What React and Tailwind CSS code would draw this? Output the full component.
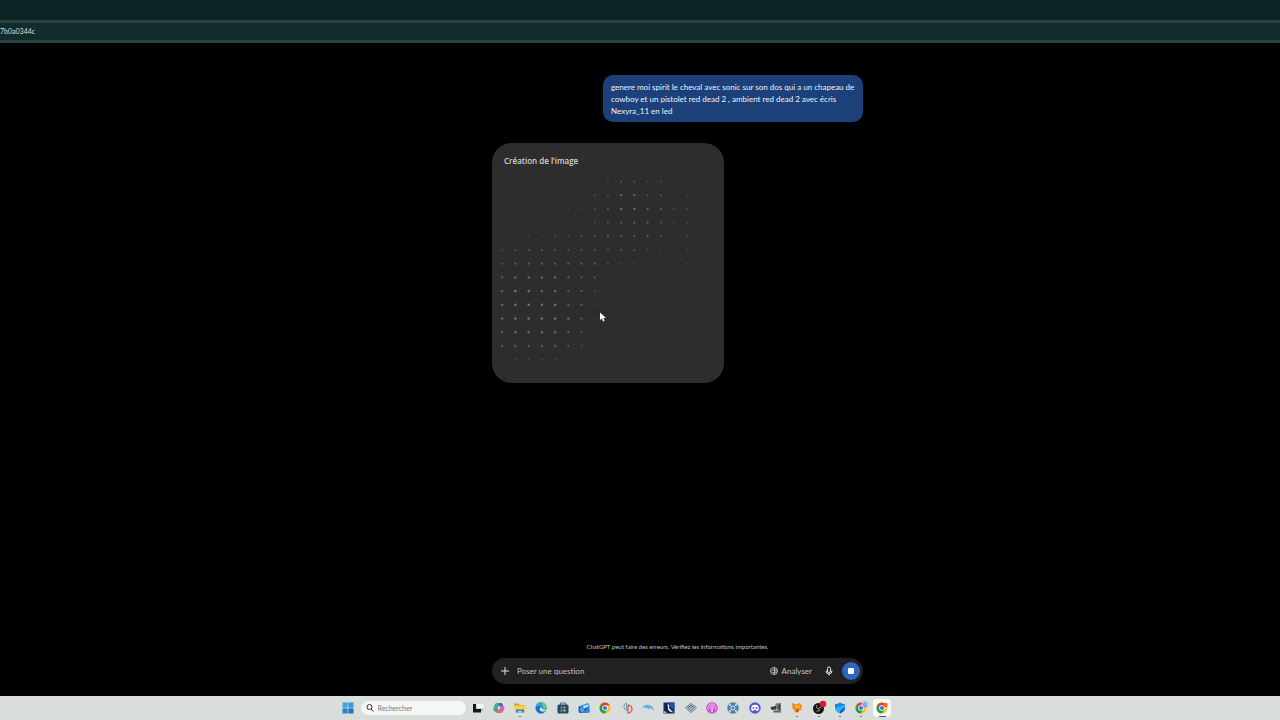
import React, { useState } from 'react';

// brightness of every dot in the loading pattern, 0 is hidden
const dotRows = [
  '000000002332200',
  '000000023443301',
  '000001123554322',
  '000001123444322',
  '001122334444302',
  '233333333332101',
  '344444443221101',
  '455554331000000',
  '566554421000000',
  '566664410000000',
  '566665410000000',
  '455554300000000',
  '344443200000000',
  '122221000000000',
];

const DotPattern = () => (
  <svg viewBox="0 0 232 206" className="block w-full" aria-hidden="true">
    {dotRows.map((row, y) =>
      row.split('').map((level, x) =>
        level === '0' ? null : (
          <circle
            key={`${x}-${y}`}
            cx={10.2 + x * 13.22}
            cy={11.5 + y * 13.7}
            r={0.8 + Number(level) * 0.08}
            fill="#a8a8a8"
            fillOpacity={0.12 + Number(level) * 0.075}
          />
        )
      )
    )}
  </svg>
);

const Icon = ({ children }) => (
  <svg viewBox="0 0 24 24" className="size-3" fill="none" aria-hidden="true">
    {children}
  </svg>
);

const ChromeShape = () => (
  <>
    <circle cx="12" cy="12" r="11" fill="#fbc116" />
    <path d="M12 12 2.5 6.5A11 11 0 0 1 21.5 6.5H12Z" fill="#e33b2e" />
    <path d="M2.5 6.5A11 11 0 0 0 11.5 23L16.8 14.7 12 12Z" fill="#229a4a" />
    <circle cx="12" cy="12" r="5.6" fill="#fff" />
    <circle cx="12" cy="12" r="4.2" fill="#3478e5" />
  </>
);

const apps = [
  {
    name: 'Vue des tâches',
    icon: (
      <Icon>
        <path d="M7 5H22V18H7Z" fill="#b4b6b6" />
        <path d="M9 4H23V13H9Z" fill="#f4f4f4" />
        <path d="M2 4H8V14H18V21H2Z" fill="#161616" />
      </Icon>
    ),
  },
  {
    name: 'Copilot',
    icon: (
      <Icon>
        <path d="M8 2H16Q18 2 19 6L20 8H14L11 17Q10 20 7 19H5Q1 19 1 14L4 5Q5 2 8 2Z" fill="#2790dc" />
        <path d="M4 5Q5 2 8 2H11L8 13Q7 16 3 17Q0 15 2 10Z" fill="#46b071" />
        <path d="M17 7H19Q24 7 23 12L20 19Q19 22 16 22H9Q6 22 5 18H9Q12 18 13 14L14 10Q15 7 17 7Z" fill="#d863ac" />
        <path d="M5 18H10Q12 18 13 14L15 19Q13 22 9 22 6 22 5 18Z" fill="#f0733f" />
        <path d="M13 2H16Q18 2 19 6L20 8H15Z" fill="#3257cb" />
        <path d="M10 9H14L12 15H9Z" fill="#e9edf2" />
      </Icon>
    ),
  },
  {
    name: 'Explorateur de fichiers',
    open: true,
    icon: (
      <Icon>
        <path d="M1 3H9L12 6H21V12H1Z" fill="#dd9b18" />
        <path d="M1 7H23V21H1Z" fill="#fbd04c" />
        <path d="M4 15H20V21H4Z" fill="#2c82cf" />
        <path d="M8 18H16V21H8Z" fill="#a9d4ef" />
      </Icon>
    ),
  },
  {
    name: 'Edge',
    icon: (
      <Icon>
        <circle cx="12" cy="12" r="11" fill="#1671c6" />
        <path d="M1 11A11 11 0 0 1 23 11Q23 17 17 17H13Q16 14 14 11 10 6 4 9Z" fill="#2ba6d2" />
        <path d="M12 1A11 11 0 0 1 23 11Q23 17 17 17H15Q19 9 12 1Z" fill="#58cf75" />
        <path d="M10 13Q11 10 14 12 15 15 15 16H22Q17 21 12 18 8 16 10 13Z" fill="#e6f3f8" />
      </Icon>
    ),
  },
  {
    name: 'Microsoft Store',
    icon: (
      <Icon>
        <path d="M7 6V2H17V6" stroke="#2d75ad" strokeWidth="2" />
        <rect x="1" y="5" width="22" height="18" rx="3" fill="#204869" />
        <path d="M7 9H11V13H7Z" fill="#e76445" />
        <path d="M13 9H17V13H13Z" fill="#8abb43" />
        <path d="M7 15H11V19H7Z" fill="#41a5e5" />
        <path d="M13 15H17V19H13Z" fill="#f4c542" />
      </Icon>
    ),
  },
  {
    name: 'Outlook',
    icon: (
      <Icon>
        <path d="M3 8 20 2 23 7V20H5Z" fill="#279ce6" />
        <path d="M1 9H18V22H4Q1 22 1 18Z" fill="#1660bc" />
        <path d="M9 9 20 5 21 8 13 13Z" fill="#c9e8f8" />
        <path d="M4 14 12 18 23 11V20Q23 22 20 22H8Z" fill="#3187d8" />
        <circle cx="8" cy="15" r="3" stroke="#b9dcf4" strokeWidth="1.6" />
      </Icon>
    ),
  },
  { name: 'Chrome', icon: <Icon><ChromeShape /></Icon> },
  {
    name: 'Lecteur',
    icon: (
      <Icon>
        <path d="M11 2A8 8 0 0 0 11 17V2" stroke="#6b9eb0" strokeWidth="2" />
        <path d="M14 6A8 8 0 0 1 14 22V6" stroke="#d9525a" strokeWidth="2.5" />
      </Icon>
    ),
  },
  {
    name: 'Dauphin',
    icon: (
      <Icon>
        <path d="M0 12Q5 4 13 6 22 7 24 18 19 11 14 12L15 16 10 12Q5 10 0 12Z" fill="#58b9d5" />
      </Icon>
    ),
  },
  {
    name: 'Jeu',
    icon: (
      <Icon>
        <path d="M1 1H23V23H1Z" fill="#112a67" />
        <path d="M12 1H23V15L16 12Z" fill="#2554a2" />
        <path d="M5 3 9 8 8 14 16 21H3L6 16Z" fill="#101729" />
        <path d="M9 3 13 7 12 12 21 21 13 19 10 15Z" fill="#dce5ed" />
        <path d="M2 18 8 20 6 22H2Z" fill="#a4bbd6" />
      </Icon>
    ),
  },
  {
    name: 'Réseau',
    icon: (
      <Icon>
        <path d="M1 11 12 3 23 11 12 21Z" stroke="#58758c" strokeWidth="2" />
        <path d="m6 11 6-4 6 4-6 6Z" stroke="#344b65" strokeWidth="2" />
        <circle cx="12" cy="11" r="2" fill="#6689a1" />
      </Icon>
    ),
  },
  {
    name: 'Podcasts',
    icon: (
      <Icon>
        <circle cx="12" cy="12" r="11.5" fill="#c64bd0" />
        <path d="M6 17A8 8 0 1 1 18 17M9 13A4 4 0 1 1 15 13" stroke="#f1b8f2" strokeWidth="2" />
        <path d="M12 10V21" stroke="#f4d3f5" strokeWidth="3" />
      </Icon>
    ),
  },
  {
    name: 'Roue',
    icon: (
      <Icon>
        <circle cx="12" cy="12" r="11.5" fill="#527fa9" />
        <path d="M7 7 17 17M17 7 7 17" stroke="#d1e2ef" strokeWidth="2" />
        <circle cx="12" cy="12" r="4" fill="#527fa9" stroke="#d1e2ef" strokeWidth="2" />
        <circle cx="6" cy="6" r="2" fill="#d1e2ef" />
        <circle cx="18" cy="6" r="2" fill="#d1e2ef" />
        <circle cx="6" cy="18" r="2" fill="#d1e2ef" />
        <circle cx="18" cy="18" r="2" fill="#d1e2ef" />
      </Icon>
    ),
  },
  {
    name: 'Discord',
    icon: (
      <Icon>
        <circle cx="12" cy="12" r="11.5" fill="#5658d8" />
        <path d="M6 7Q12 4 18 7 21 12 19 17L16 18 14 16H10L8 18 5 17Q3 12 6 7Z" fill="#fff" />
        <circle cx="9" cy="12" r="1.8" fill="#5658d8" />
        <circle cx="15" cy="12" r="1.8" fill="#5658d8" />
      </Icon>
    ),
  },
  {
    name: 'Caméra',
    icon: (
      <Icon>
        <path d="M11 3 22 2V22L16 20 15 15 10 14Z" fill="#77797b" />
        <path d="M1 10 12 8V15L3 16Z" fill="#343638" />
        <path d="M8 17H18V21H6Z" fill="#5d5d5d" />
        <path d="M17 5H20V15H17Z" fill="#303234" />
      </Icon>
    ),
  },
  {
    name: 'Renard',
    open: true,
    icon: (
      <Icon>
        <path d="M2 2 9 5 17 2 23 8 20 12 22 17 17 15 15 22 10 19 7 23V16L3 13Z" fill="#ee8b1c" />
        <path d="m9 6 5 2 4-2-1 6-4 2-5-4Z" fill="#f9b540" />
        <path d="m11 15 5-2-2 7-4-1Z" fill="#a84e1b" />
      </Icon>
    ),
  },
  {
    name: 'OBS',
    open: true,
    icon: (
      <svg viewBox="0 0 24 24" className="size-3 overflow-visible" fill="none" aria-hidden="true">
        <circle cx="11" cy="13" r="11" fill="#151515" />
        <path d="M8 6Q5 12 11 13M17 12Q12 9 10 14M7 18Q14 20 13 14" stroke="#bbb" strokeWidth="1.6" />
        <circle cx="20" cy="4" r="6.5" fill="#de1736" />
      </svg>
    ),
  },
  {
    name: 'Sécurité',
    open: true,
    icon: (
      <Icon>
        <path d="M2 4Q8 4 12 1 16 4 22 4V12Q21 19 12 23 3 19 2 12Z" fill="#1686e3" />
        <path d="M2 13 22 5V12Q21 19 12 23 4 19 2 13Z" fill="#29b6f3" />
        <path d="M12 18 22 9V12Q21 19 12 23Z" fill="#1760ce" />
      </Icon>
    ),
  },
  {
    name: 'Chrome, profil',
    open: true,
    icon: (
      <svg viewBox="0 0 24 24" className="size-3 overflow-visible" fill="none" aria-hidden="true">
        <ChromeShape />
        <circle cx="20" cy="5" r="7" fill="#b9cff0" />
        <circle cx="20" cy="4" r="3" stroke="#547bc0" strokeWidth="1.5" />
        <path d="M16 10Q20 6 24 10" stroke="#547bc0" strokeWidth="1.5" />
      </svg>
    ),
  },
  {
    name: 'Chrome, ChatGPT',
    active: true,
    icon: (
      <Icon>
        <ChromeShape />
        <circle cx="19" cy="6" r="4.5" fill="#ee6a2c" />
      </Icon>
    ),
  },
];

const Composer = () => {
  const [question, setQuestion] = useState('');

  return (
    <form
      onSubmit={(e) => e.preventDefault()}
      className="flex h-[26px] w-full items-center rounded-full bg-[#212121] pl-2 pr-[3px] text-[#c6c6c6]"
    >
      <button type="button" aria-label="Ajouter" className="text-[#e4e4e4]">
        <svg viewBox="0 0 10 10" className="size-[10px]" fill="none" stroke="currentColor" aria-hidden="true">
          <path d="M5 1V9M1 5H9" />
        </svg>
      </button>
      <input
        type="text"
        aria-label="Poser une question"
        placeholder="Poser une question"
        value={question}
        onChange={(e) => setQuestion(e.target.value)}
        className="ml-[7px] min-w-0 flex-1 bg-transparent text-[8px] leading-3 outline-none placeholder:text-[#c0c0c0]"
      />
      <button type="button" className="flex items-center gap-1 text-[8px] leading-3">
        <svg viewBox="0 0 16 16" className="size-2" fill="none" stroke="currentColor" strokeWidth="1.8" aria-hidden="true">
          <circle cx="8" cy="8" r="7" />
          <path d="M9 1V15M9 6H5L2 9M9 11H5M12 4V12" />
        </svg>
        Analyser
      </button>
      <button type="button" aria-label="Dicter" className="ml-3 text-[#e8e8e8]">
        <svg viewBox="0 0 20 20" className="size-[10px]" fill="none" stroke="currentColor" strokeWidth="2" aria-hidden="true">
          <rect x="7" y="2" width="6" height="11" rx="3" />
          <path d="M4 9Q4 16 10 16T16 9M10 16V19" />
        </svg>
      </button>
      <button
        type="button"
        aria-label="Arrêter"
        className="ml-2 flex size-[18px] items-center justify-center rounded-full bg-[#2f65bd]"
      >
        <span className="size-[6px] rounded-[1px] bg-white" />
      </button>
    </form>
  );
};

const Taskbar = () => (
  <footer className="flex h-6 items-center justify-center bg-[#d9dddb] pr-[50px]">
    <button type="button" aria-label="Démarrer" className="mr-[7px]">
      <svg viewBox="0 0 24 24" className="size-3" aria-hidden="true">
        <path d="M1 1H11.3V11.3H1Z" fill="#38a6df" />
        <path d="M12.7 1H23V11.3H12.7Z" fill="#2f9add" />
        <path d="M1 12.7H11.3V23H1Z" fill="#2387cb" />
        <path d="M12.7 12.7H23V23H12.7Z" fill="#1778c1" />
      </svg>
    </button>
    <label className="mr-[6px] flex h-[14px] w-[105px] items-center rounded-full bg-[#f5f7f6] pl-[5px]">
      <svg viewBox="0 0 16 16" className="size-2 shrink-0" fill="none" stroke="#333" strokeWidth="2" aria-hidden="true">
        <circle cx="7" cy="6" r="5" />
        <path d="m10 10 5 5" />
      </svg>
      <input
        type="text"
        aria-label="Rechercher"
        placeholder="Rechercher"
        className="ml-1 w-full min-w-0 bg-transparent text-[7px] leading-3 outline-none placeholder:text-[#777]"
      />
    </label>
    <nav className="flex w-[417px] items-center justify-between">
      {apps.map((app) => (
        <button key={app.name} type="button" aria-label={app.name} className="relative flex size-3 items-center justify-center">
          {app.active && <span className="absolute -inset-x-[3px] -inset-y-[3px] rounded-sm bg-[#f7f8f8]" />}
          <span className="relative">{app.icon}</span>
          {app.open && <span className="absolute -bottom-[3px] left-[5px] h-px w-[2px] bg-[#777]" />}
          {app.active && <span className="absolute -bottom-[3px] left-[3px] h-px w-[7px] bg-[#345fa8]" />}
        </button>
      ))}
    </nav>
  </footer>
);

const App = () => {
  return (
    <div className="relative flex min-h-screen flex-col bg-black font-[Lato,sans-serif]">
      <header>
        <div className="h-5 bg-[#0b2425]" />
        <div className="flex h-[23px] items-center border-y-[3px] border-[#294242] bg-[#142b2b] text-[7px] text-[#d8dfdf]">
          7b0a0344c
        </div>
      </header>

      <main className="flex flex-1 flex-col pl-[75px]">
        <div className="mx-auto flex w-full max-w-[371px] flex-1 flex-col">
          <p className="mt-8 w-[260px] self-end rounded-[10px] bg-[#1b407a] px-2 pb-[5px] pt-[6px] text-[8px] leading-3 text-[#eef3fa]">
            genere moi spirit le cheval avec sonic sur son dos qui a un chapeau de cowboy et un pistolet red dead 2 , ambient red dead 2 avec écris Nexyra_11 en led
          </p>

          <section className="relative mt-[21px] w-[232px] rounded-[20px] bg-[#2d2d2d] pb-[7px] pt-3">
            <h1 className="mb-[3px] px-3 font-['Open_Sans',sans-serif] text-[8px] font-semibold leading-3 text-[#d4d4d4]">Création de l’image</h1>
            <DotPattern />
            <svg viewBox="0 0 12 18" className="absolute left-[108px] top-[169px] h-[10px] w-[6px]" aria-hidden="true">
              <path d="M0 0V15L4 12 6 18 9 17 7 11H12Z" fill="#fff" />
            </svg>
          </section>

          <div className="mb-3 mt-auto flex flex-col items-center gap-[7px]">
            <p className="text-[6px] leading-2 text-[#c4c4c4]">
              ChatGPT peut faire des erreurs. Vérifiez les informations importantes.
            </p>
            <Composer />
          </div>
        </div>
      </main>

      <Taskbar />
    </div>
  );
};

export default App;
